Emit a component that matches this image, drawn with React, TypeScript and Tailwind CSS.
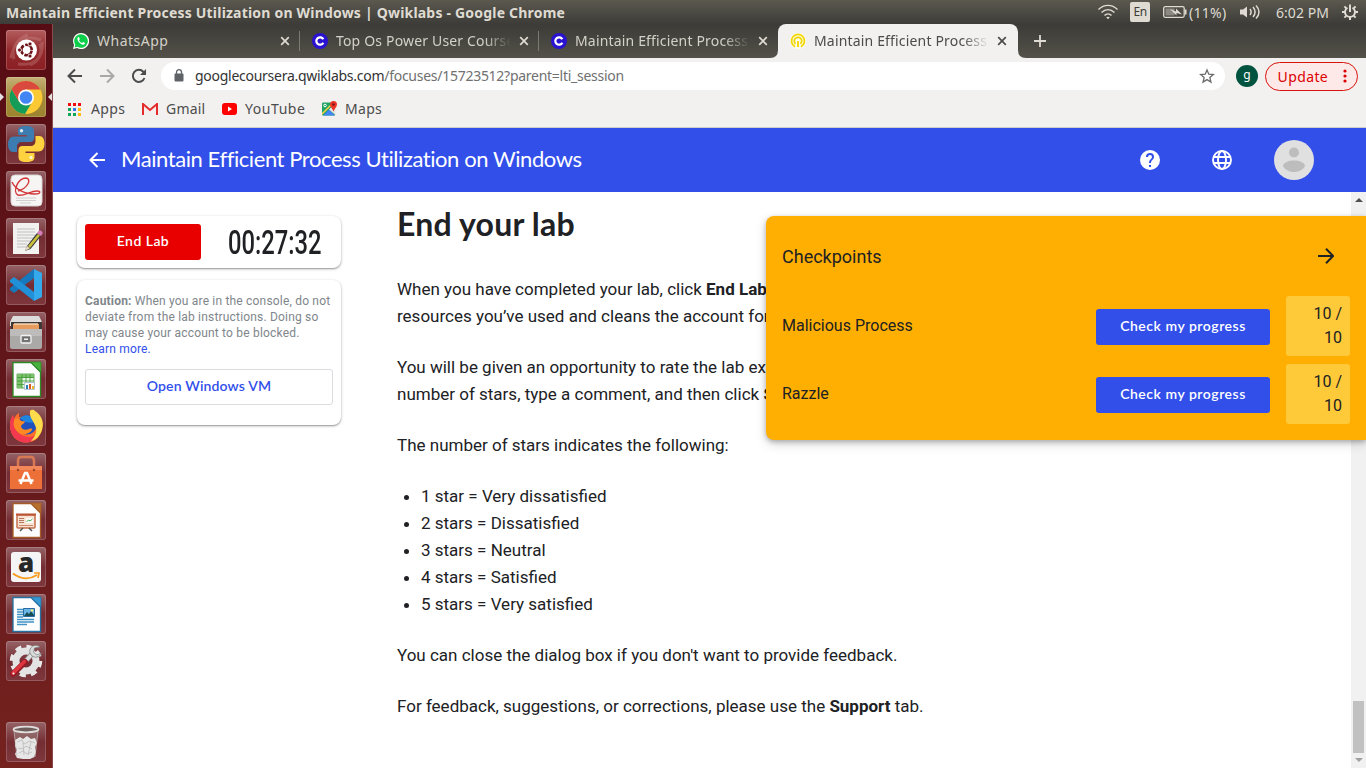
import React from "react";

const ubuntu = "font-['Noto_Sans','Open_Sans',sans-serif]";
const product = "font-['Lato','Noto_Sans',sans-serif]";

type Launch = { name: string; art: React.ReactNode; bg?: string };

const sheet = (dark: string, light: string) => (
  <>
    <path d="M7 3.500H25L34.500 13V37.500H7z" fill="#fdfdfd" stroke={dark} strokeWidth="1.300" />
    <path d="M25 3H35V13z" fill={light} stroke={dark} strokeWidth=".8" />
  </>
);

const apps: Launch[] = [
  {
    name: "Dash",
    bg: "bg-linear-to-b from-[#b35c5e] via-[#942a2e] to-[#8b1f24]",
    art: (
      <>
        <g fill="none" stroke="#d49a98" strokeOpacity=".3" strokeWidth="3">
          <path d="M5 28C7 12 20 4 35 10M36 12C38 28 28 36 12 34M8 29C5 18 11 9 22 5M34 14c3 10-2 18-10 21" />
        </g>
        <circle cx="20.500" cy="20" r="10.500" fill="#fff" />
        <circle cx="20.500" cy="20" r="5.200" fill="none" stroke="#6b1016" strokeWidth="2.600" strokeDasharray="9.400 1.500" strokeDashoffset="-0.700" />
        <circle cx="13.500" cy="20" r="2" fill="#6b1016" stroke="#fff" strokeWidth=".8" />
        <circle cx="24" cy="13.900" r="2" fill="#6b1016" stroke="#fff" strokeWidth=".8" />
        <circle cx="24" cy="26.100" r="2" fill="#6b1016" stroke="#fff" strokeWidth=".8" />
      </>
    ),
  },
  {
    name: "Chrome",
    bg: "bg-linear-to-b from-[#c5b076] via-[#a48c3c] to-[#9d842d]",
    art: (
      <>
        <circle cx="20" cy="20.500" r="16.500" fill="#fbc934" />
        <path d="M5.700 12.250A16.500 16.500 0 0 0 19 37l7-12L13 24.500z" fill="#149c58" />
        <path d="M20 12.500H34.300A16.500 16.500 0 0 0 5.700 12.250L13 24.500z" fill="#d9493d" />
        <circle cx="20" cy="20.500" r="8" fill="#fff" />
        <circle cx="20" cy="20.500" r="6.300" fill="#4285f4" />
      </>
    ),
  },
  {
    name: "Python",
    art: (
      <>
        <path d="M20 2c-7 0-8 2.500-8 5v4h9v1.500H8C4 12.500 2 16 2 20.500S4 28 7 28h4v-5c0-3 2-5 5-5h8c3 0 4-2 4-4V7c0-3-2-5-8-5z" fill="#3c7cb0" />
        <path d="M20.500 38c7 0 8-2.500 8-5v-4h-9v-1.500h13c4 0 6-3.500 6-8S36.500 12 33.500 12h-4v5c0 3-2 5-5 5h-8c-3 0-4 2-4 4v7c0 3 2 5 8 5z" fill="#ffd33f" />
        <circle cx="15.500" cy="6.800" r="1.700" fill="#dbe9f3" />
        <circle cx="25" cy="33.500" r="1.700" fill="#fff6cc" />
      </>
    ),
  },
  {
    name: "Document Viewer",
    art: (
      <>
        <rect x="5" y="4" width="31" height="31" rx="4" fill="#f6f5f4" stroke="#d8d4d2" />
        <path d="M6 11c3 7 12 12 23 12 6 0 6-3 2-3-7 0-14 6-19 4-6-3 0-17 8-17 6 1 2 10-8 13" fill="none" stroke="#d3383b" strokeWidth="1.400" />
        <path d="M10 27h20M10 29.500h20M14 32h11" stroke="#cfcfcf" />
      </>
    ),
  },
  {
    name: "Text Editor",
    art: (
      <>
        <path d="M7 5h26v31H7z" fill="#f2f2f0" />
        <path d="M11 11h18M11 14h18M11 17h18M11 20h17M11 23h14M11 26h10M11 29h10" stroke="#c0c0c0" strokeWidth="1.100" />
        <path d="M19 33l2-5L31 15l4 3-10.500 13z" fill="#383838" />
        <path d="M22 28 32 16l2 1.500-10 12.500z" fill="#c9c13e" />
        <path d="m19 33 2-5 3 2.300z" fill="#eadcc0" />
        <path d="m31 15 1.500-2c2-1.500 5 1 3.800 3L35 18z" fill="#d67fbf" />
      </>
    ),
  },
  {
    name: "VS Code",
    art: (
      <>
        <path d="M28 4 36 8V32l-8 4z" fill="#34a9ec" />
        <path d="M28 4v9L8 28l-4-3v-2z" fill="#1678bd" />
        <path d="M28 36v-9L8 12l-4 3v2z" fill="#2090d8" />
      </>
    ),
  },
  {
    name: "Files",
    art: (
      <>
        <path d="M7 4h26l3 6v4H4v-4z" fill="#dedddb" />
        <path d="M5 10h31v8H5z" fill="#3f3835" />
        <path d="M7 12h26v6H7z" fill="#e79c5e" />
        <path d="M8 12h24" stroke="#f4d7b8" strokeWidth="1.500" />
        <path d="M4 17h32v18c0 1-1 2-2 2H6c-1 0-2-1-2-2z" fill="#aaa9a7" />
        <path d="M4 17h32v7H4z" fill="#bdbcba" />
        <rect x="15" y="23.500" width="10" height="7.500" rx="1" fill="#777" stroke="#f3f3f3" strokeWidth="1.300" />
        <path d="M17.500 26h5v2.500h-5z" fill="#eee" stroke="#555" strokeWidth=".7" />
      </>
    ),
  },
  {
    name: "Calc",
    art: (
      <>
        {sheet("#2b8a25", "#48b13d")}
        <path d="M11 15h17v14H11z" fill="#e7f4e2" stroke="#65ae5b" />
        <path d="M11 15h17v4H11zM11 18h5v11h-5z" fill="#7cc06d" />
        <path d="M11 18.500h17M11 22h17M11 25.500h17M16 15v14M20 15v14M24 15v14" stroke="#3f9b35" strokeWidth=".8" />
        <path d="M18.500 23.500h10v7h-10z" fill="#f6f9fc" stroke="#a5b7cc" strokeWidth=".8" />
        <path d="M20 26h2v4h-2z" fill="#2e7db7" /><path d="M23 25h2v5h-2z" fill="#da5b25" /><path d="M26 27h2v3h-2z" fill="#edb628" />
      </>
    ),
  },
  {
    name: "Firefox",
    art: (
      <>
        <path d="M4 19c0-4 1-7 3-10l1 4c1-3 3-5 5-6v4h14l-3-7c12 4 13 12 12 18C35 31 29 36.500 20 36.500S4 30 4 19z" fill="#ff6d2a" />
        <path d="M4 19c0-4 1-7 3-10l1 4c-1 10 5 17 14 18 5 0 9-2 12-4-3 6-8 9.500-14 9.500C11 36.500 4 30 4 19z" fill="#f2394f" />
        <circle cx="21" cy="19" r="9.500" fill="#1f51bd" />
        <path d="M14 12c3-3 8-4 11-1l2 6-8-1z" fill="#1e84dd" />
        <path d="M24 5c2-2 4-1 5 0 8 5 9 13 7 19-2 6-6 10-11 11 4-4 6-9 5-13-1-6-7-9-6-17z" fill="#ffdc4c" />
        <path d="M9 13c3-1 5 0 6 2l4 .5c-1 2.500-3 2.500-4 4.500 0 3 4 5 8 3 2-1 4 0 3 1-3 5-12 6-16 0-3-4-3-7-1-11z" fill="#ff8a25" />
      </>
    ),
  },
  {
    name: "Software",
    art: (
      <>
        <path d="M12 15V8c0-2 1-4 3-4h10c2 0 3 2 3 4v7" fill="none" stroke="#d87954" strokeWidth="2.500" />
        <path d="M4 13h32v23H4z" fill="#ed7038" />
        <path d="M4 13h32v4H4z" fill="#f3875a" />
        <circle cx="12" cy="17" r="1.200" fill="#974725" /><circle cx="28" cy="17" r="1.200" fill="#974725" />
        <path d="M14.500 31 19 20h2L25.500 31M12.500 27.500h15" fill="none" stroke="#fff" strokeWidth="2.500" />
      </>
    ),
  },
  {
    name: "Impress",
    art: (
      <>
        {sheet("#a65c24", "#b5702d")}
        <rect x="11" y="15" width="18" height="13" rx="1" fill="#f7e1d3" stroke="#c76d49" strokeWidth="1.500" />
        <path d="M10 14.500h20" stroke="#ba5435" strokeWidth="2" />
        <path d="M13 18.500h5M13 20.500h5M13 22.500h5" stroke="#b67761" />
        <path d="M20 18h7v5h-7z" fill="#fff" /><path d="m20.500 22 2-2 1.500 1 2.500-2" fill="none" stroke="#42a543" />
        <path d="M13 25.500h14" stroke="#ce8b6b" /><path d="m17 28-3 3M23 28l3 3" stroke="#555" strokeWidth="1.500" />
      </>
    ),
  },
  {
    name: "Amazon",
    art: (
      <>
        <rect x="5" y="5" width="30" height="30" rx="3" fill="#f5f5f5" />
        <text x="20" y="25" textAnchor="middle" fontFamily="Open Sans, sans-serif" fontSize="26" fontWeight="800" fill="#272727">a</text>
        <path d="M7 26.500c8 6 17 6 24 1.500" fill="none" stroke="#f79b1d" strokeWidth="2" />
        <path d="M28 26h5l-1 5" fill="none" stroke="#f79b1d" strokeWidth="1.700" />
      </>
    ),
  },
  {
    name: "Writer",
    art: (
      <>
        {sheet("#2371a3", "#3598d2")}
        <path d="M11 15.500h6M11 18h6M11 20.500h6M11 23h6M11 25.500h17M11 28h17M11 30.500h10" stroke="#4193c8" strokeWidth="1.400" />
        <path d="M17.500 14.500h11v8h-11z" fill="#6bb6e7" stroke="#276ba0" />
        <path d="m18 22 3-4 2 2 2-3 3 4v1z" fill="#184d56" /><circle cx="26" cy="16.500" r="1.200" fill="#ffe56c" />
      </>
    ),
  },
  {
    name: "Settings",
    art: (
      <>
        <circle cx="20" cy="20" r="14" fill="none" stroke="#e8e8e8" strokeWidth="4.500" strokeDasharray="6 5" />
        <circle cx="20" cy="20" r="10" fill="none" stroke="#e3e3e3" strokeWidth="7" />
        <path d="m18 22 8-9" stroke="#888" strokeWidth="5" />
        <path d="m18 22 8-9" stroke="#ddd" strokeWidth="3.500" />
        <path d="M34 6a6 6 0 1 0 1.500 6l-5 2-3-3 1-4z" fill="#d9dada" stroke="#777" strokeWidth=".7" />
        <path d="m7 33 12-12" stroke="#971b23" strokeWidth="6" strokeLinecap="round" />
        <path d="m7 32 11.500-11.500" stroke="#de3640" strokeWidth="3.500" strokeLinecap="round" />
        <circle cx="7.500" cy="32.500" r="1" fill="#fff" />
      </>
    ),
  },
];

const trash = (
  <>
    <path d="M8 8h24l-3 27c0 2-18 2-18 0z" fill="#aca5a2" fillOpacity=".35" />
    <ellipse cx="20" cy="7.500" rx="12.500" ry="2.800" fill="#6d5d5b" stroke="#e1dddc" strokeWidth="1.800" />
    <path d="m9 18 5-3 3 2 4-3 4 3 4-1 2 5-2 4 1 5-2 5-4 2h-7l-6-1-2-4 2-4-2-4z" fill="#e6e6e6" />
    <path d="m11 20 5-2 2 4 6-3 5 2M12 26l5 1 3-3 6 3M13 31l4-2 4 3 5-2M17 21l1 12M25 20l-3 13" fill="none" stroke="#b9b9b9" strokeWidth=".8" />
    <path d="m8 9 3 26M32 9l-3 26" stroke="#c7c0be" strokeOpacity=".7" />
  </>
);

function Tile({ name, art, bg }: Launch) {
  return (
    <div aria-label={name} className={`relative h-10 w-10 shrink-0 rounded-[3px] shadow-[inset_0_0_0_1px_rgba(255,255,255,.18)] ${bg ?? "bg-linear-to-b from-[#956367] via-[#742d33] to-[#7d373d]"}`}>
      <svg viewBox="0 0 40 40" className="h-10 w-10">{art}</svg>
      {name === "Chrome" && (
        <>
          <svg className="absolute top-4 -left-1.5 h-2 w-1" viewBox="0 0 4 8"><path d="M0 0 4 4 0 8z" fill="#e5dfe0" /></svg>
          <svg className="absolute top-4 -right-1.5 h-2 w-1" viewBox="0 0 4 8"><path d="M4 0 0 4l4 4z" fill="#e5dfe0" /></svg>
        </>
      )}
    </div>
  );
}

function SystemBar() {
  return (
    <header className={`flex h-6 shrink-0 items-center bg-linear-to-b from-[#5b594f] to-[#3d3c38] pl-[6px] text-[#dfdbd2] ${ubuntu}`}>
      <span className="w-[557px] text-[14px] font-bold tracking-[0.2px] whitespace-nowrap">Maintain Efficient Process Utilization on Windows | Qwiklabs - Google Chrome</span>
      <div className="ml-[535px] flex items-center">
        <svg viewBox="0 0 20 16" className="h-4 w-5" fill="none" stroke="#dfdbd2" strokeWidth="1.400"><path d="M.5 5.500C6 0 14 0 19.500 5.500M3.500 8.500c4-3.800 9-3.800 13 0M6.500 11.500c2-2 5-2 7 0" /><path d="M8.200 13.300 10 15.200l1.800-1.900c-1-.9-2.600-.9-3.600 0z" fill="#dfdbd2" stroke="none" /></svg>
        <span className="ml-3 flex h-5 w-5 items-center justify-center rounded-[2px] bg-[#dfdbd2] text-[12px] tracking-[-0.5px] text-[#3d3c38]">En</span>
        <svg viewBox="0 0 24 12" className="ml-[13px] h-3 w-6"><rect x=".7" y=".7" width="20.500" height="10.600" rx="1.500" fill="none" stroke="#dfdbd2" strokeWidth="1.300" /><path d="M2.500 2.500h9v7h-9z" fill="#8b8982" /><path d="M22 3.500h1.500v5H22z" fill="#dfdbd2" /><path d="m7 3 6 2.500V2.500l6 6-5.500-1.500v2.500z" fill="#dfdbd2" /></svg>
        <span className="ml-[2px] w-[41px] text-[14px] tracking-[0.3px] whitespace-nowrap">(11%)</span>
        <svg viewBox="0 0 20 16" className="ml-[10px] h-4 w-5" fill="none" stroke="#dfdbd2" strokeWidth="1.500"><path d="M0 5.500h3L7 2.500v11L3 10.500H0z" fill="#dfdbd2" stroke="none" /><path d="M10 5c1.500 2 1.500 4 0 6M13 3c2.500 3 2.500 7 0 10M16 1.500c4 4 4 9 0 13" /></svg>
        <span className="ml-[16px] w-[54px] text-[14px] tracking-[0.05px] whitespace-nowrap">6:02 PM</span>
        <svg viewBox="0 0 16 16" className="ml-[12px] h-4 w-4" fill="none" stroke="#dfdbd2"><path d="M5.500 3.700a5 5 0 1 0 5 0" strokeWidth="1.900" /><path d="M8 .5V8M0 8h3M13 8h3M8 13v3M2.400 2.400l2 2M13.600 2.400l-2 2M2.400 13.600l2-2M13.600 13.600l-2-2" strokeWidth="2" /></svg>
      </div>
    </header>
  );
}

const CloseX = ({ color }: { color: string }) => (
  <svg viewBox="0 0 10 10" className="h-[10px] w-[10px] shrink-0"><path d="m1.200 1.200 7.600 7.600M8.800 1.200 1.200 8.800" stroke={color} strokeWidth="1.700" /></svg>
);

const WhatsAppIcon = () => (
  <svg viewBox="0 0 16 16" className="h-4 w-4 shrink-0"><path d="M8 0a8 8 0 0 0-6.900 12L0 16l4.100-1.100A8 8 0 1 0 8 0z" fill="#fff" /><path d="M8 1.200a6.800 6.800 0 0 0-5.700 10.500l-.7 2.700 2.700-.7A6.800 6.800 0 1 0 8 1.200z" fill="#0cce4b" /><path d="M5.200 4c-2 1.500.2 5 2.200 6.500 2 1.600 4.300 1.700 4.600-.4l-1.900-1-1 1C7.500 9.500 6.500 8.300 6 7.200l.8-1L6 4.200z" fill="#fff" /></svg>
);
const CourseraIcon = () => (
  <svg viewBox="0 0 16 16" className="h-4 w-4 shrink-0"><circle cx="8" cy="8" r="8" fill="#2a12d1" /><path d="M11.300 6.300a3.700 3.700 0 1 0 0 3.400" fill="none" stroke="#fff" strokeWidth="2.200" /></svg>
);
const QwikIcon = () => (
  <svg viewBox="0 0 16 16" className="h-4 w-4 shrink-0"><circle cx="8" cy="8" r="8" fill="#fffce8" /><path d="M5 13.700a6.500 6.500 0 1 1 6 0M5.600 10.800a3.700 3.700 0 1 1 4.800 0" fill="none" stroke="#f2d600" strokeWidth="1.700" /><path d="M7.100 8h1.800v6H7.100z" fill="#f2d600" /></svg>
);

function TabItem({ icon, title, active, sep, first }: { icon: React.ReactNode; title: string; active?: boolean; sep?: boolean; first?: boolean }) {
  return (
    <div className={`relative flex h-[34px] shrink-0 items-center pl-3 ${active ? "w-[240px] rounded-t-lg bg-[#f2f1f0] text-[#4c4c4c]" : "w-[239px] text-[#d3d1c8]"}`}>
      {icon}
      <span className={`mb-0.5 ml-[8px] w-[175px] overflow-hidden text-[14px] whitespace-nowrap ${first ? "tracking-[0.5px]" : "mask-r-from-85% tracking-[0.17px]"}`}>{title}</span>
      <span className="ml-[8px] flex"><CloseX color={active ? "#4c4c4c" : "#dfdbd2"} /></span>
      {sep && <i className="absolute right-0 h-5 w-px bg-[#7c7a72]" />}
      {active && (
        <>
          <svg className="absolute bottom-0 -left-2 h-2 w-2" viewBox="0 0 8 8"><path d="M8 0v8H0q8 0 8-8" fill="#f2f1f0" /></svg>
          <svg className="absolute -right-2 bottom-0 h-2 w-2" viewBox="0 0 8 8"><path d="M0 0v8h8Q0 8 0 0" fill="#f2f1f0" /></svg>
        </>
      )}
    </div>
  );
}

function BrowserChrome() {
  return (
    <div className={`shrink-0 ${ubuntu}`}>
      <div className="flex h-[34px] bg-linear-to-b from-[#3c3b37] to-[#535149] pl-2">
        <TabItem icon={<WhatsAppIcon />} title="WhatsApp" sep first />
        <TabItem icon={<CourseraIcon />} title="Top Os Power User Courses" sep />
        <TabItem icon={<CourseraIcon />} title="Maintain Efficient Process Utilization" />
        <TabItem icon={<QwikIcon />} title="Maintain Efficient Process Utilization" active />
        <svg viewBox="0 0 12 12" className="mt-[11px] ml-[16px] h-3 w-3"><path d="M6 0v12M0 6h12" stroke="#dfdbd2" strokeWidth="1.800" /></svg>
      </div>
      <div className="flex h-[36px] items-center bg-[#f2f1f0] pl-[14px]">
        <svg viewBox="0 0 16 16" className="h-4 w-4" fill="none" stroke="#4c4c4c" strokeWidth="2"><path d="M15 8H2M8 1.500 1.500 8 8 14.500" /></svg>
        <svg viewBox="0 0 16 16" className="ml-4 h-4 w-4" fill="none" stroke="#a9a8a6" strokeWidth="2"><path d="M1 8h13M8 1.500 14.500 8 8 14.500" /></svg>
        <svg viewBox="0 0 16 16" className="ml-4 h-4 w-4"><path d="M13.500 10A6 6 0 1 1 12.300 3.800L14 5.500" fill="none" stroke="#4c4c4c" strokeWidth="2" /><path d="M15 1v6H9z" fill="#4c4c4c" /></svg>
        <div className="ml-[14px] flex h-7 w-[1064px] items-center rounded-full bg-white pl-[13px]">
          <svg viewBox="0 0 10 13" className="-mt-px h-[13px] w-[10px]"><rect x=".5" y="4.500" width="9" height="8" rx="1" fill="#5f6368" /><path d="M2.500 5V3.200a2.500 2.500 0 0 1 5 0V5" fill="none" stroke="#5f6368" strokeWidth="1.300" /></svg>
          <span className="mb-0.5 ml-[11px] text-[14px] tracking-[-0.27px] whitespace-nowrap text-[#707070]"><span className="text-[#333]">googlecoursera.qwiklabs.com</span>/focuses/15723512?parent=lti_session</span>
          <svg viewBox="0 0 24 24" className="mr-[10px] ml-auto h-4 w-4"><path d="m12 3 2.700 6.300 6.800.6-5.200 4.400 1.600 6.700L12 17.400 6.100 21l1.600-6.700-5.200-4.400 6.800-.6z" fill="none" stroke="#6b6b6b" strokeWidth="2" /></svg>
        </div>
        <span className="ml-[11px] flex h-[22px] w-[22px] items-center justify-center rounded-full bg-[#00533f] pb-0.5 text-[12px] text-white">g</span>
        <div className="ml-[7px] flex h-[29px] w-[93px] items-center rounded-full border border-[#d9120c] bg-[#fce9e8] pl-[11.500px] text-[14px] text-[#d00]">
          <span className="w-[51px] tracking-[0.4px]">Update</span>
          <svg viewBox="0 0 4 14" className="ml-[14px] h-[14px] w-1" fill="#d00"><circle cx="2" cy="2" r="1.600" /><circle cx="2" cy="7" r="1.600" /><circle cx="2" cy="12" r="1.600" /></svg>
        </div>
      </div>
      <div className="flex h-[34px] items-center border-b border-[#cfcdcb] bg-[#f2f1f0] pb-[3px] pl-[15px] text-[14px] text-[#4c4c4c]">
        <svg viewBox="0 0 13 13" className="h-[13px] w-[13px]"><path d="M0 0h3v3H0zM5 0h3v3H5zM10 0h3v3h-3z" fill="#f00c0c" /><path d="M0 5h3v3H0zM0 10h3v3H0zM5 10h3v3H5z" fill="#10a65a" /><path d="M5 5h3v3H5z" fill="#3279e8" /><path d="M10 5h3v3h-3zM10 10h3v3h-3z" fill="#fdb90c" /></svg>
        <span className="mb-0.5 ml-[10px] w-[51px] tracking-[0.4px]">Apps</span>
        <svg viewBox="0 0 16 12" className="h-3 w-4"><path d="M1 1h14v10H1z" fill="#f4eeee" /><path d="M1 12V1l7 6 7-6v11" fill="none" stroke="#e42b2b" strokeWidth="2" /></svg>
        <span className="mb-0.5 ml-[8px] w-[56px] tracking-[0.2px]">Gmail</span>
        <svg viewBox="0 0 16 12" className="h-3 w-4"><rect width="15" height="12" rx="3" fill="red" /><path d="m6 3.500 4 2.500-4 2.500z" fill="#fff" /></svg>
        <span className="mb-0.5 ml-[7px] w-[77px] tracking-[0.55px]">YouTube</span>
        <svg viewBox="0 0 16 16" className="h-4 w-4"><rect y="1.500" width="13" height="13" rx="1" fill="#1fa463" /><path d="m1 14.500 6-6 6 6z" fill="#4285f4" /><path d="M7 8.500 13.500 2v12z" fill="#e8e6e2" /><path d="m0 13 10-10" stroke="#ffd04b" strokeWidth="1.500" /><circle cx="3" cy="4.500" r="1.300" fill="none" stroke="#fff" /><path d="M11.500 0A3.500 3.500 0 0 0 8 3.500c0 2.500 2.500 4 3.500 7 1-3 3.500-4.500 3.500-7A3.500 3.500 0 0 0 11.500 0z" fill="#ea3428" /><circle cx="11.500" cy="3.500" r="1.200" fill="#741711" /></svg>
        <span className="mb-0.5 ml-[7px] tracking-[0.3px]">Maps</span>
      </div>
    </div>
  );
}

function PageHeader() {
  return (
    <div className="flex h-16 shrink-0 items-center bg-[#324fea] pl-9 text-white">
      <svg viewBox="0 0 16 16" className="h-4 w-4" fill="none" stroke="#fff" strokeWidth="2"><path d="M16 8H2M8.500 1 1.500 8l7 7" /></svg>
      <h1 className={`mb-[3px] ml-4 w-[600px] text-[22px] tracking-[-0.43px] whitespace-nowrap ${product}`}>Maintain Efficient Process Utilization on Windows</h1>
      <div className="mr-[52px] ml-auto flex items-center">
        <svg viewBox="0 0 24 24" className="h-6 w-6" fill="#fff"><path d="M12 2a10 10 0 1 0 0 20 10 10 0 0 0 0-20zm1 17h-2v-2h2zm2.070-7.750-.9.920C13.450 12.900 13 13.500 13 15h-2v-.5c0-1.100.450-2.100 1.170-2.830l1.240-1.260c.370-.360.590-.860.590-1.410a2 2 0 0 0-4 0H8a4 4 0 0 1 8 0c0 .880-.360 1.680-.930 2.250z" /></svg>
        <svg viewBox="0 0 24 24" className="ml-12 h-6 w-6" fill="none" stroke="#fff" strokeWidth="1.900"><circle cx="12" cy="12" r="9" /><ellipse cx="12" cy="12" rx="4" ry="9" /><path d="M3.500 9h17M3.500 15h17" /></svg>
        <svg viewBox="0 0 40 40" className="ml-10 h-10 w-10"><circle cx="20" cy="20" r="20" fill="#e0e0e0" /><circle cx="20" cy="12.500" r="5" fill="#bdbdbd" /><path d="M9 26c0-3.500 6-5.500 11-5.500S31 22.500 31 26c-2 4-7 6-11 6s-9-2-11-6z" fill="#bdbdbd" /></svg>
      </div>
    </div>
  );
}

const cardShadow = "shadow-[0_1px_3px_rgba(0,0,0,.3),0_1px_1px_rgba(0,0,0,.18)]";

function SidePanel() {
  return (
    <aside className="ml-6 w-[264px] shrink-0 pt-6">
      <div className={`flex h-[52px] items-center rounded-lg bg-white p-2 ${cardShadow}`}>
        <button className={`h-9 w-[116px] rounded-[3px] bg-[#e80000] pb-[3px] text-[14px] font-semibold tracking-[0.45px] text-white ${product}`}>End Lab</button>
        <span className="ml-[27px] w-[93px] origin-left scale-x-[0.72] text-[33px] leading-none font-medium whitespace-nowrap text-[#202124]">00:27:32</span>
      </div>
      <div className={`mt-3 h-[145px] rounded-lg bg-white px-2 pt-[13px] ${cardShadow}`}>
        <p className="text-[12px] leading-4 tracking-[0.19px] whitespace-nowrap text-[#80868b]">
          <b>Caution:</b> When you are in the console, do not<br />deviate from the lab instructions. Doing so<br />may cause your account to be blocked.<br /><a className="text-[#324fea]">Learn more.</a>
        </p>
        <button className={`mt-3 h-9 w-[248px] rounded-[3px] border border-[#dadce0] pb-[3px] text-[14px] font-semibold tracking-[0.15px] text-[#324fea] ${product}`}>Open Windows VM</button>
      </div>
    </aside>
  );
}

function Instructions() {
  return (
    <article className="ml-14 flex-1 text-[17px] leading-[27px] whitespace-nowrap text-[#202124]">
      <h2 className={`pt-[13px] text-[32px] leading-[38px] font-bold tracking-[0.2px] ${product}`}>End your lab</h2>
      <p className="mt-[33px]">When you have completed your lab, click <b>End Lab</b>. Qwiklabs removes the<br />resources you’ve used and cleans the account for you.</p>
      <p className="mt-6">You will be given an opportunity to rate the lab experience. Select the<br />number of stars, type a comment, and then click <b>Submit</b>.</p>
      <p className="mt-6">The number of stars indicates the following:</p>
      <ul className="mt-6 list-disc pl-6">
        <li>1 star = Very dissatisfied</li>
        <li>2 stars = Dissatisfied</li>
        <li>3 stars = Neutral</li>
        <li>4 stars = Satisfied</li>
        <li>5 stars = Very satisfied</li>
      </ul>
      <p className="mt-6">You can close the dialog box if you don't want to provide feedback.</p>
      <p className="mt-6">For feedback, suggestions, or corrections, please use the <b>Support</b> tab.</p>
    </article>
  );
}

function Checkpoints() {
  return (
    <section className="absolute top-6 right-0 h-[224px] w-[600px] rounded-l-lg bg-[#ffaf02] px-4 pt-5 text-[#202124] shadow-[0_2px_5px_rgba(0,0,0,.25),0_4px_12px_rgba(0,0,0,.15)]">
      <div className="flex h-[41px] items-center justify-between pr-4">
        <h3 className="text-[18px]">Checkpoints</h3>
        <svg viewBox="0 0 16 16" className="mb-px h-4 w-4" fill="none" stroke="#202124" strokeWidth="2"><path d="M0 8h15M8 .7 15.200 8 8 15.300" /></svg>
      </div>
      <div className="mt-[19px] flex flex-col gap-2">
        {["Malicious Process", "Razzle"].map((n) => (
          <div key={n} className="flex h-[60px] items-center text-[16px]">
            <span>{n}</span>
            <button className={`mt-0.5 ml-auto h-9 w-[174px] rounded-[3px] bg-[#324fea] pb-[3px] text-[14px] font-semibold tracking-[0.53px] text-white ${product}`}>Check my progress</button>
            <span className="ml-4 h-[60px] w-16 rounded-[3px] bg-[#ffca3a] pt-[6px] pr-2 text-right leading-6">10 /<br />10</span>
          </div>
        ))}
      </div>
    </section>
  );
}

export default function App() {
  return (
    <div className="flex h-[768px] w-[1366px] flex-col overflow-hidden font-['Roboto',sans-serif]">
      <SystemBar />
      <div className="flex min-h-0 flex-1">
        <nav className="flex w-[53px] shrink-0 flex-col gap-[7px] border-r border-[#8a4a4c] bg-linear-to-b from-[#560c12] via-[#62171b] to-[#75221f] pt-[6px] pl-[6px]">
          {apps.map((a) => <Tile key={a.name} {...a} />)}
          <div className="mt-[34px]"><Tile name="Trash" art={trash} /></div>
        </nav>
        <main className="flex min-w-0 flex-1 flex-col">
          <BrowserChrome />
          <PageHeader />
          <div className="relative flex min-h-0 flex-1 bg-white">
            <SidePanel />
            <Instructions />
            <div className="flex w-[15px] shrink-0 flex-col items-center bg-[#f1f1f1] py-[6px]">
              <svg viewBox="0 0 8 4" className="h-1 w-2"><path d="m0 4 4-4 4 4z" fill="#505050" /></svg>
              <div className="mt-auto mb-[5px] h-[52px] w-[11px] bg-[#c1c1c1]" />
              <svg viewBox="0 0 8 4" className="h-1 w-2"><path d="m0 0 4 4 4-4z" fill="#a0a0a0" /></svg>
            </div>
            <Checkpoints />
          </div>
        </main>
      </div>
    </div>
  );
}
